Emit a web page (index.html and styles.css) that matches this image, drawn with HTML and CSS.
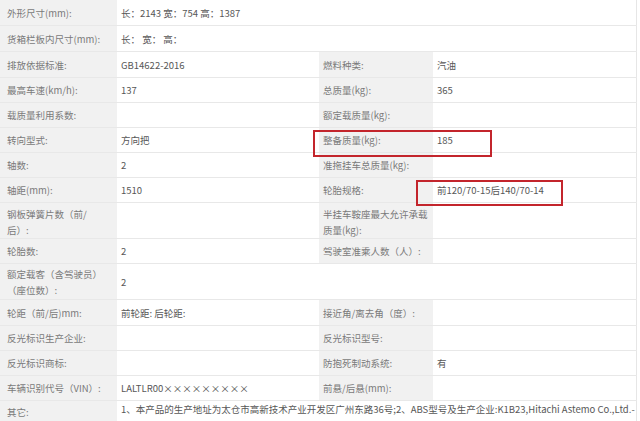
FILE: index.html
```html
<!DOCTYPE html>
<html lang="zh-CN">
<head>
    <meta charset="UTF-8">
    <meta name="viewport" content="width=device-width, initial-scale=1.0">
    <title>车辆参数</title>
    <link rel="stylesheet" href="styles.css">
</head>
<body>
    <div class="sheet">
        <table class="params">
            <colgroup>
                <col class="c-label">
                <col class="c-value">
                <col class="c-label2">
                <col class="c-value2">
            </colgroup>
            <tr class="wide">
                <td class="label">外形尺寸(mm):</td>
                <td class="value" colspan="3">长：2143 宽：754 高：1387</td>
            </tr>
            <tr class="wide">
                <td class="label">货箱栏板内尺寸(mm):</td>
                <td class="value" colspan="3">长： 宽： 高：</td>
            </tr>
            <tr class="wide">
                <td class="label">排放依据标准:</td>
                <td class="value">GB14622-2016</td>
                <td class="label">燃料种类:</td>
                <td class="value">汽油</td>
            </tr>
            <tr>
                <td class="label">最高车速(km/h):</td>
                <td class="value">137</td>
                <td class="label">总质量(kg):</td>
                <td class="value">365</td>
            </tr>
            <tr>
                <td class="label">载质量利用系数:</td>
                <td class="value"></td>
                <td class="label">额定载质量(kg):</td>
                <td class="value"></td>
            </tr>
            <tr>
                <td class="label">转向型式:</td>
                <td class="value">方向把</td>
                <td class="label">整备质量(kg):</td>
                <td class="value">185</td>
            </tr>
            <tr>
                <td class="label">轴数:</td>
                <td class="value">2</td>
                <td class="label">准拖挂车总质量(kg):</td>
                <td class="value"></td>
            </tr>
            <tr>
                <td class="label">轴距(mm):</td>
                <td class="value">1510</td>
                <td class="label">轮胎规格:</td>
                <td class="value">前120/70-15后140/70-14</td>
            </tr>
            <tr class="tall spring">
                <td class="label">钢板弹簧片数（前/<br>后）:</td>
                <td class="value"></td>
                <td class="label">半挂车鞍座最大允许承载<br>质量(kg):</td>
                <td class="value"></td>
            </tr>
            <tr>
                <td class="label">轮胎数:</td>
                <td class="value">2</td>
                <td class="label">驾驶室准乘人数（人）:</td>
                <td class="value"></td>
            </tr>
            <tr class="tall">
                <td class="label">额定载客（含驾驶员）<br>（座位数）:</td>
                <td class="value">2</td>
                <td class="value" colspan="2"></td>
            </tr>
            <tr class="wide">
                <td class="label">轮距（前/后)mm:</td>
                <td class="value">前轮距: 后轮距:</td>
                <td class="label">接近角/离去角（度）:</td>
                <td class="value"></td>
            </tr>
            <tr>
                <td class="label">反光标识生产企业:</td>
                <td class="value"></td>
                <td class="label">反光标识型号:</td>
                <td class="value"></td>
            </tr>
            <tr>
                <td class="label">反光标识商标:</td>
                <td class="value"></td>
                <td class="label">防抱死制动系统:</td>
                <td class="value">有</td>
            </tr>
            <tr>
                <td class="label">车辆识别代号（VIN）:</td>
                <td class="value">LALTLR00×××××××××</td>
                <td class="label">前悬/后悬(mm):</td>
                <td class="value"></td>
            </tr>
            <tr class="other">
                <td class="label">其它:</td>
                <td class="value" colspan="3">1、本产品的生产地址为太仓市高新技术产业开发区广州东路36号;2、ABS型号及生产企业:K1B23,Hitachi Astemo Co.,Ltd.-</td>
            </tr>
        </table>
        <div class="mark mark-mass"></div>
        <div class="mark mark-tyre"></div>
    </div>
</body>
</html>
```

FILE: styles.css
```css
body {
    margin: 0;
    background: #fff;
    font-family: "Noto Sans CJK SC", "Noto Sans", sans-serif;
    font-size: 9.5px;
    overflow: hidden;
}
.sheet {
    position: relative;
    width: 640px;
    height: 421px;
    overflow: hidden;
}
.params {
    width: 636px;
    border-collapse: collapse;
    table-layout: fixed;
    border-right: 1px solid #e6e6e6;
}
.c-label { width: 117px; }
.c-value { width: 202px; }
.c-label2 { width: 114px; }
.c-value2 { width: 203px; }
.params td {
    height: 24px;
    padding: 0 4px;
    border-bottom: 1px solid #e8e8e8;
    line-height: 16px;
    vertical-align: middle;
    white-space: nowrap;
}
.params tr.wide td {
    height: 25px;
}
.params tr.tall td {
    height: 35px;
}
.params tr.spring td {
    padding-top: 3px;
    height: 32px;
}
.params tr.other td {
    height: 30px;
    vertical-align: top;
    padding-top: 0;
}
.params tr.other td.label {
    padding-top: 3px;
}
.label {
    background: #f1f1f1;
    color: #7a7a7a;
}
.params td:first-child {
    padding-left: 7px;
}
.value {
    background: #fff;
    color: #575757;
}
.mark {
    position: absolute;
    border: 2px solid #c3252c;
    box-sizing: border-box;
}
.mark-mass {
    left: 313px;
    top: 130px;
    width: 179px;
    height: 27px;
}
.mark-tyre {
    left: 416px;
    top: 180px;
    width: 147px;
    height: 26px;
}
```
